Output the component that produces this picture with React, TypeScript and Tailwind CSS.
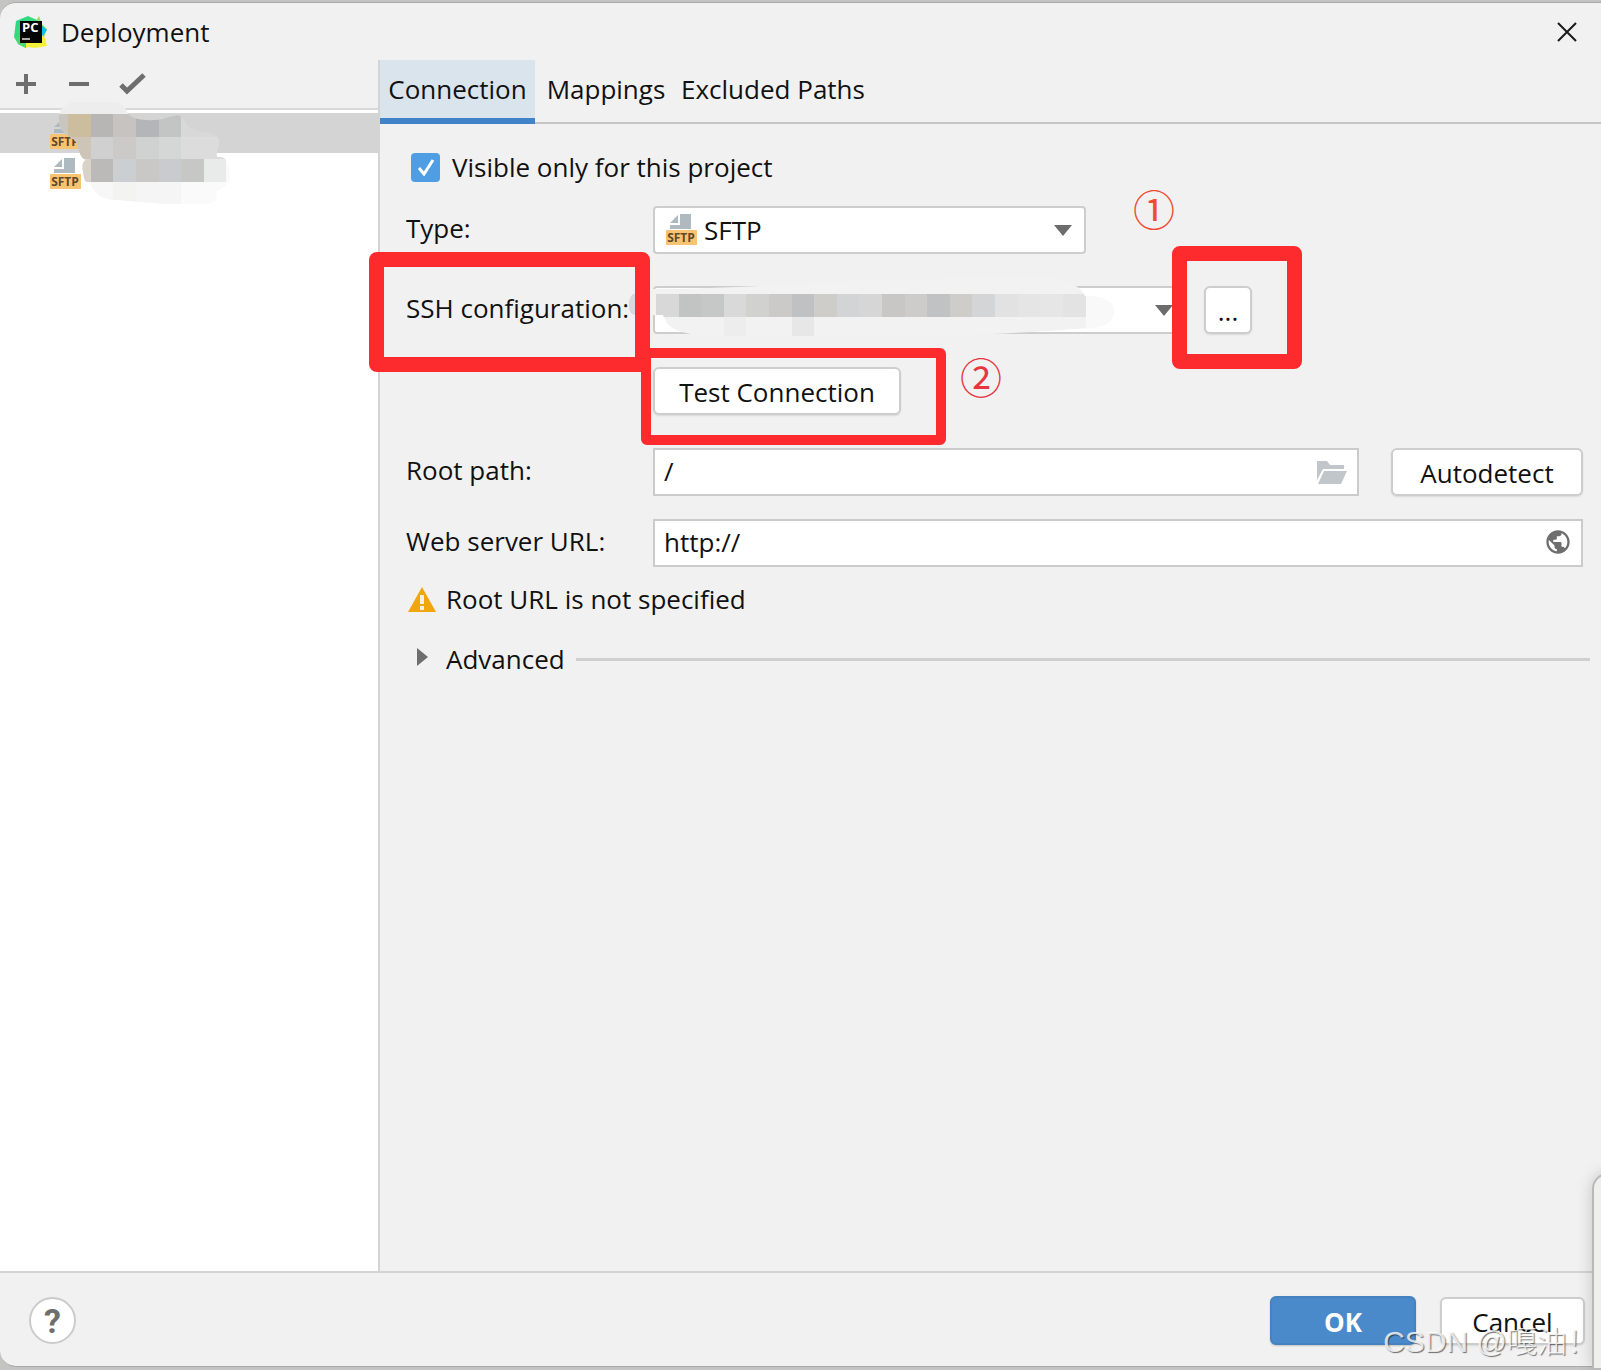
import { useState } from "react";
import type { ReactNode } from "react";
import { MdPublic } from "react-icons/md";

const tabs = [
  { label: "Connection", width: "w-[155px]" },
  { label: "Mappings", width: "w-[142px]" },
  { label: "Excluded Paths", width: "w-[192px]" },
];

const PyCharmIcon = () => (
  <svg viewBox="0 0 34 34" className="h-[34px] w-[34px]" aria-hidden="true">
    <defs>
      <linearGradient id="pc-green" x1="0" y1="0" x2="1" y2="1">
        <stop offset="0" stopColor="#21d789" />
        <stop offset="1" stopColor="#4fe06e" />
      </linearGradient>
    </defs>
    <path d="M21 8l4-7 3 8 5 5-3 8-8-2z" fill="#8fe35c" />
    <path d="M26 9l7 6-4 6-4 2z" fill="#07c3f2" />
    <path d="M2 6l12-5 9 4v12L12 33 4 29 0 22z" fill="url(#pc-green)" />
    <path d="M10 27l18-7 3 3 2 8-12 2-7-1-4 1z" fill="#f4f03a" />
    <path d="M4 22l8 3v8l-8-4z" fill="#43dc74" />
    <rect x="6" y="6" width="22" height="22" fill="#050505" />
    <text x="8" y="17" fontSize="13" fontWeight="700" fill="#fff" fontFamily="Open Sans, sans-serif">
      PC
    </text>
    <rect x="8" y="23" width="8" height="2" fill="#aaa" />
  </svg>
);

const SftpIcon = () => (
  <svg viewBox="0 0 31 31" className="h-[31px] w-[31px] shrink-0 overflow-visible" aria-hidden="true">
    <path d="M14 0h11v15H4v-4h10z" fill="#afb9c0" />
    <path d="M12 1v8H4z" fill="#afb9c0" />
    <rect y="16" width="31" height="15" fill="#f8c471" />
    <text
      x="15"
      y="28"
      fontSize="12"
      fontWeight="700"
      textAnchor="middle"
      fill="#5f4a2a"
      fontFamily="Open Sans, sans-serif"
    >
      SFTP
    </text>
  </svg>
);

const FolderIcon = () => (
  <svg viewBox="0 0 30 23" className="h-[23px] w-[30px]" aria-hidden="true">
    <path d="M0 0h10l3 4h14v4H6L0 19z" fill="#c0c6c9" />
    <path d="M7 10h23l-6 13H1z" fill="#c0c6c9" />
  </svg>
);

const WarningIcon = () => (
  <svg viewBox="0 0 28 25" className="h-[25px] w-[28px]" aria-hidden="true">
    <path d="M14 0l14 25H0z" fill="#f2a60d" />
    <path d="M12 8h4v9h-4zM12 19h4v4h-4z" fill="#f7f1e2" />
  </svg>
);

const DropArrow = ({ className }: { className: string }) => (
  <svg
    viewBox="0 0 18 11"
    className={`pointer-events-none absolute top-[19px] h-[11px] w-[18px] ${className}`}
    aria-hidden="true"
  >
    <path d="M0 0h18l-9 11z" fill="#6c6c6c" />
  </svg>
);

// server names in the list, pixelated
const ListMosaic = () => (
  <svg viewBox="0 0 180 106" className="pointer-events-none absolute top-[-12px] left-[57px] h-[106px] w-[180px]">
    <defs>
      <clipPath id="list-mosaic">
        <path d="M2 16C3 5 10 1 22 1h36c6 0 10 5 12 10 4 9 28 10 38 6l12-3c8 0 8 10 14 14 14 4 28 2 28 13 0 8-4 12-2 15 8 0 10 3 11 9 4 8 3 16-6 22l-6 4c4 8-3 12-10 12H108L60 99c-16 0-22-7-27-16-7-2-6-8-7-12-2-8 1-13 5-12-8 0-8-8-13-20C8 34 1 28 2 16z" />
      </clipPath>
    </defs>
    <g clipPath="url(#list-mosaic)">
      <rect width="180" height="13" fill="#ededed" />
      <rect y="13" width="180" height="46" fill="#d8d8d8" />
      <rect y="58" width="180" height="48" fill="#fafafa" />
      <rect y="13" width="11" height="23" fill="#c9c6c0" />
      <rect x="11" y="13" width="23" height="23" fill="#cdbd9f" />
      <rect x="34" y="13" width="22" height="23" fill="#b7b6b5" />
      <rect x="56" y="13" width="23" height="23" fill="#c6c3c0" />
      <rect x="79" y="13" width="23" height="23" fill="#b4b5b8" />
      <rect x="102" y="13" width="22" height="23" fill="#c3c5c4" />
      <rect x="11" y="36" width="23" height="22" fill="#cdc5b8" />
      <rect x="34" y="36" width="22" height="22" fill="#d0d0d0" />
      <rect x="56" y="36" width="23" height="22" fill="#cbcac9" />
      <rect x="79" y="36" width="23" height="22" fill="#d0d1d1" />
      <rect x="102" y="36" width="22" height="22" fill="#d4d7d6" />
      <rect x="124" y="36" width="50" height="22" fill="#dcdcdc" />
      <rect x="11" y="58" width="23" height="23" fill="#d8d2c8" />
      <rect x="34" y="58" width="22" height="23" fill="#bbbab9" />
      <rect x="56" y="58" width="23" height="23" fill="#cccfd2" />
      <rect x="79" y="58" width="23" height="23" fill="#cac8c6" />
      <rect x="102" y="58" width="22" height="23" fill="#c9cbce" />
      <rect x="124" y="58" width="23" height="23" fill="#c7c7c5" />
      <rect x="147" y="58" width="22" height="23" fill="#e9ebeb" />
      <rect x="34" y="81" width="22" height="24" fill="#f7f7f7" />
      <rect x="56" y="81" width="23" height="24" fill="#f3f3f2" />
      <rect x="79" y="81" width="45" height="24" fill="#f5f5f5" />
    </g>
  </svg>
);

const hostCells = [
  "#d8d8d8", "#c2c3c3", "#c6c8c8", "#d9d9d9", "#d1d1cf", "#cbcac8", "#bfc1c3",
  "#cfcdca", "#d3d4d5", "#d6d6d6", "#c9c7c5", "#cdccca", "#c0c2c4", "#cecdca",
  "#d4d5d7", "#e2e2e2", "#e5e5e5", "#e6e6e6", "#e3e3e3",
];

// the chosen host, pixelated
const HostMosaic = () => (
  <svg viewBox="0 0 500 62" className="pointer-events-none absolute top-[-9px] left-[-33px] h-[62px] w-[500px]">
    <defs>
      <clipPath id="host-mosaic">
        <path d="M9 28c0-8 3-12 8-12h16v-4c60 0 110-3 180-7 60-3 130-5 210-4 22 0 38 8 42 18 14 0 29 4 29 14 0 12-8 16-22 18-60 4-110 8-200 8H110c-30 0-54-1-64-14l-3-7H17C12 38 9 36 9 28z" />
      </clipPath>
    </defs>
    <g clipPath="url(#host-mosaic)">
      <rect width="500" height="62" fill="#f2f2f2" />
      <rect y="17" width="20" height="22" fill="#d8d8d8" />
      <rect x="466" y="12" width="34" height="44" fill="#f9f9f9" />
      <rect x="104" y="40" width="22" height="22" fill="#ededed" />
      <rect x="172" y="40" width="22" height="22" fill="#e7e7e7" />
      {hostCells.map((fill, i) => (
        <rect key={i} x={36 + Math.round(i * 22.6)} y="17" width="23" height="23" fill={fill} />
      ))}
    </g>
  </svg>
);

const PushButton = ({ children, className }: { children: ReactNode; className: string }) => (
  <button
    type="button"
    className={`h-[48px] shrink-0 rounded-md border-2 border-[#cdcdcd] bg-white pt-[2px] shadow-[0_1px_2px_rgba(0,0,0,0.1)] ${className}`}
  >
    {children}
  </button>
);

const labelClass = "w-[247px] shrink-0 pb-1 whitespace-nowrap";
const fieldClass = "h-[48px] w-full border-2 border-[#cbcbcb] bg-white pl-[9px] pb-[2px] outline-none";
const stepClass =
  "pointer-events-none absolute font-['Noto_Sans_CJK_SC',sans-serif] text-[42px] leading-[42px]";

export default function App() {
  const [tab, setTab] = useState("Connection");
  const [visible, setVisible] = useState(true);

  return (
    <div className="relative flex min-h-screen flex-col overflow-hidden bg-[#c4c4c2] pt-[2px] pb-[3px] font-['Open_Sans','Noto_Sans_CJK_SC',sans-serif] text-[26px] leading-[30px] text-[#111]">
      <div className="flex flex-1 flex-col overflow-hidden rounded-l-2xl border-y border-[#a9a9a9] bg-[#f1f1f1]">
        <header className="flex h-[57px] items-center pr-[24px] pl-[14px]">
          <PyCharmIcon />
          <h1 className="ml-[13px] flex-1">Deployment</h1>
          <button type="button" aria-label="Close">
            <svg viewBox="0 0 20 20" className="h-[20px] w-[20px]">
              <path d="M1 1l18 18M19 1L1 19" stroke="#1a1a1a" strokeWidth="2" />
            </svg>
          </button>
        </header>

        <div className="flex flex-1">
          <aside className="flex w-[380px] shrink-0 flex-col border-r-2 border-[#d4d4d4] bg-white">
            <div className="flex h-[50px] items-center border-b-2 border-[#d9d9d9] bg-[#f1f1f1] pl-[16px]">
              <button type="button" aria-label="Add">
                <svg viewBox="0 0 20 20" className="h-[20px] w-[20px]">
                  <path d="M0 10h20M10 0v20" stroke="#6e6e6e" strokeWidth="4" />
                </svg>
              </button>
              <button type="button" aria-label="Remove" className="ml-[33px]">
                <svg viewBox="0 0 20 20" className="h-[20px] w-[20px]">
                  <path d="M0 10h20" stroke="#6e6e6e" strokeWidth="4" />
                </svg>
              </button>
              <button type="button" aria-label="Use as default" className="ml-[30px]">
                <svg viewBox="0 0 27 22" className="h-[22px] w-[27px]">
                  <path d="M2 12l6 6L25 2" fill="none" stroke="#6e6e6e" strokeWidth="5" />
                </svg>
              </button>
            </div>
            <ul className="relative mt-[3px]">
              <li className="flex h-[40px] items-center bg-[#d4d4d4] pl-[50px]">
                <SftpIcon />
              </li>
              <li className="flex h-[40px] items-center pl-[50px]">
                <SftpIcon />
              </li>
              <ListMosaic />
            </ul>
          </aside>

          <main className="min-w-0 flex-1">
            <nav className="flex h-[64px] border-b-2 border-[#c6c6c6]">
              {tabs.map(({ label, width }) => (
                <button
                  key={label}
                  type="button"
                  onClick={() => setTab(label)}
                  className={`h-[64px] shrink-0 whitespace-nowrap ${width} ${
                    tab === label ? "border-b-6 border-[#4083c9] bg-[#dae4ed]" : "pb-[6px]"
                  }`}
                >
                  {label}
                </button>
              ))}
            </nav>

            <form className="pt-[28px] pr-[18px] pl-[26px]" onSubmit={(e) => e.preventDefault()}>
              <label className="flex h-[30px] items-center pl-[5px]">
                <input
                  type="checkbox"
                  checked={visible}
                  onChange={(e) => setVisible(e.target.checked)}
                  className="peer sr-only"
                />
                <span className="grid h-[29px] w-[29px] place-items-center rounded-[4px] bg-[#4f9ee3] text-transparent peer-checked:text-white">
                  <svg viewBox="0 0 18 18" className="h-[18px] w-[18px]">
                    <path d="M2 10l5 6L16 2" fill="none" stroke="currentColor" strokeWidth="3" />
                  </svg>
                </span>
                <span className="ml-3">Visible only for this project</span>
              </label>

              <div className="relative mt-6 flex items-center">
                <label htmlFor="type" className={labelClass}>
                  Type:
                </label>
                <div className="relative w-[433px]">
                  <select
                    id="type"
                    className="h-[48px] w-full appearance-none rounded-[4px] border-2 border-[#cdcdcd] bg-white pl-[49px] outline-none"
                  >
                    <option>SFTP</option>
                  </select>
                  <div className="pointer-events-none absolute top-[8px] left-[13px]">
                    <SftpIcon />
                  </div>
                  <DropArrow className="right-[14px]" />
                </div>
                <span className={`${stepClass} top-[-19px] left-[727px] text-[#f04a32]`}>①</span>
              </div>

              <div className="relative mt-8 flex items-center">
                <label htmlFor="ssh" className={labelClass}>
                  SSH configuration:
                </label>
                <div className="relative w-[528px]">
                  <select
                    id="ssh"
                    className="h-[48px] w-full appearance-none rounded-[4px] border-2 border-[#cdcdcd] bg-white outline-none"
                  />
                  <DropArrow className="right-[8px]" />
                  <HostMosaic />
                </div>
                <PushButton className="ml-[23px] w-[48px]">...</PushButton>
                <div className="pointer-events-none absolute top-[-34px] left-[-37px] h-[120px] w-[281px] rounded-lg border-15 border-[#fd2b2d]" />
                <div className="pointer-events-none absolute top-[-40px] left-[766px] h-[123px] w-[130px] rounded-lg border-15 border-[#fd2b2d]" />
              </div>

              <div className="relative mt-[33px] flex pl-[247px]">
                <PushButton className="w-[248px]">Test Connection</PushButton>
                <div className="pointer-events-none absolute top-[-19px] left-[235px] h-[97px] w-[305px] rounded-md border-10 border-[#fd2b2d]" />
                <span className={`${stepClass} top-[-12px] left-[554px] text-[#e6363f]`}>②</span>
              </div>

              <div className="mt-[33px] flex items-center">
                <label htmlFor="root" className={labelClass}>
                  Root path:
                </label>
                <div className="relative flex-1">
                  <input id="root" defaultValue="/" className={fieldClass} />
                  <button type="button" aria-label="Browse" className="absolute top-[13px] right-[12px]">
                    <FolderIcon />
                  </button>
                </div>
                <PushButton className="ml-[32px] w-[192px]">Autodetect</PushButton>
              </div>

              <div className="mt-[23px] flex items-center">
                <label htmlFor="url" className={labelClass}>
                  Web server URL:
                </label>
                <div className="relative flex-1">
                  <input id="url" defaultValue="http://" className={fieldClass} />
                  <button type="button" aria-label="Open in browser" className="absolute top-[9px] right-[11px]">
                    <MdPublic className="h-[28px] w-[28px] text-[#6e6e6e]" />
                  </button>
                </div>
              </div>

              <p className="mt-[17px] flex items-center pl-[2px]">
                <WarningIcon />
                <span className="ml-[10px]">Root URL is not specified</span>
              </p>
            </form>

            <div className="mt-[30px] flex items-center pr-[11px] pl-[37px]">
              <button type="button" className="flex items-center">
                <svg viewBox="0 0 11 18" className="mb-1 h-[18px] w-[11px]">
                  <path d="M0 0l11 9-11 9z" fill="#6e6e6e" />
                </svg>
                <span className="ml-[18px]">Advanced</span>
              </button>
              <div className="ml-[11px] h-[3px] flex-1 bg-[#cfcfcf]" />
            </div>
          </main>
        </div>

        <footer className="flex h-[95px] items-center border-t-2 border-[#d3d3d3] pt-[2px] pr-[16px] pl-[29px]">
          <button
            type="button"
            aria-label="Help"
            className="h-[47px] w-[47px] rounded-full border-2 border-[#cbcbcb] bg-white font-['Roboto',sans-serif] text-[34px] font-bold text-[#6e6e6e]"
          >
            ?
          </button>
          <button
            type="button"
            className="ml-auto h-[49px] w-[146px] rounded-md border-2 border-[#4682c0] bg-[#4b8aca] pt-[2px] font-bold text-white shadow-[0_1px_2px_rgba(0,0,0,0.2)]"
          >
            OK
          </button>
          <PushButton className="ml-[24px] w-[145px]">Cancel</PushButton>
        </footer>
      </div>

      {/* edge of the window in front */}
      <div className="absolute right-[-20px] bottom-0 h-[197px] w-[29px] rounded-tl-2xl border-2 border-[#b9b9b9] bg-[#efefee] shadow-[0_0_16px_rgba(0,0,0,0.18)]" />
      <p className="pointer-events-none absolute right-[4px] bottom-[13px] font-['Liberation_Sans','Noto_Sans_CJK_SC',sans-serif] text-[30px] font-light whitespace-nowrap text-white/80 [text-shadow:1px_1px_1px_rgba(0,0,0,0.55)]">
        CSDN @嘎油！
      </p>
    </div>
  );
}
